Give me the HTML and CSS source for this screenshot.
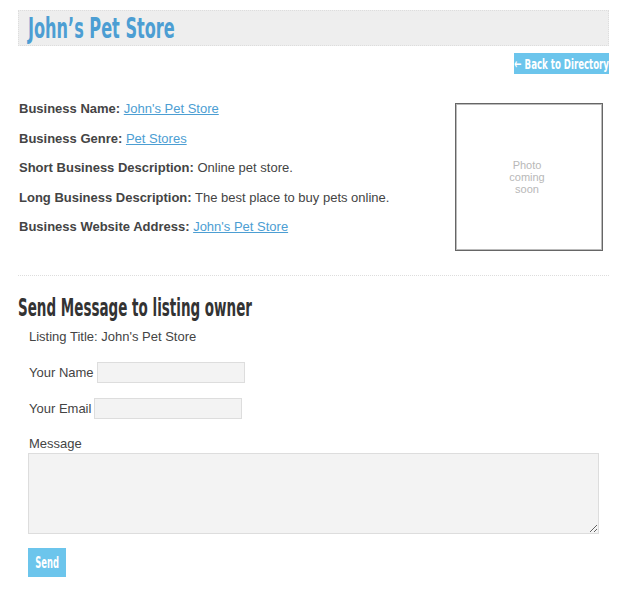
FILE: index.html
```html
<!DOCTYPE html>
<html>
<head>
<link rel="stylesheet" href="styles.css">
</head>
<body>

<div class="page">
  <h1 class="title"><span class="narrow">John’s Pet Store</span></h1>

  <div class="back-row">
    <a class="back-link" href="#"><span class="narrow">&larr; Back to Directory</span></a>
  </div>

  <div class="listing">
    <div class="details">
      <p><b>Business Name:</b> <a href="#">John's Pet Store</a></p>
      <p><b>Business Genre:</b> <a href="#">Pet Stores</a></p>
      <p><b>Short Business Description:</b> Online pet store.</p>
      <p><b>Long Business Description:</b> The best place to buy pets online.</p>
      <p><b>Business Website Address:</b> <a href="#">John's Pet Store</a></p>
    </div>
    <div class="photo">
      <span>Photo<br>coming<br>soon</span>
    </div>
  </div>

  <hr class="divider">

  <h2 class="section-title"><span class="narrow">Send Message to listing owner</span></h2>

  <form class="contact" action="#">
    <p class="listing-title">Listing Title: John's Pet Store</p>
    <div class="field">
      <label for="name">Your Name</label>
      <input type="text" id="name" name="name">
    </div>
    <div class="field">
      <label for="email">Your Email</label>
      <input type="text" id="email" name="email">
    </div>
    <div class="field-block">
      <label for="message">Message</label>
      <textarea id="message" name="message"></textarea>
    </div>
    <button type="submit"><span class="narrow">Send</span></button>
  </form>
</div>

</body>
</html>
```

FILE: styles.css
```css
body {
  margin: 0;
  font-family: "Liberation Sans", Arial, sans-serif;
  font-size: 13px;
  color: #444;
  background: #fff;
}

.page {
  padding: 10px 21px 0 18px;
}

/* condensed display face stand-in */
.narrow {
  display: inline-block;
  font-family: "DejaVu Sans Condensed", "DejaVu Sans", sans-serif;
  font-weight: bold;
  transform: scaleX(0.7);
  transform-origin: left center;
  white-space: nowrap;
}

.title {
  margin: 0;
  padding: 0 9px;
  height: 34px;
  line-height: 35px;
  background: #eee;
  border: 1px dotted #ddd;
  font-weight: normal;
  font-size: 28px;
  color: #4c9ed3;
}

.title .narrow {
  transform: scaleX(0.64);
}

.back-row {
  display: flex;
  justify-content: flex-end;
  margin-top: 7px;
}

.back-link {
  display: block;
  width: 95px;
  height: 21px;
  overflow: hidden;
  background: #6cc5ec;
  color: #fff;
  text-decoration: none;
  font-size: 14.5px;
  line-height: 22px;
  text-align: center;
}

.back-link .narrow {
  transform: scaleX(0.66);
  transform-origin: center;
  margin: 0 -30px;
}

.listing {
  display: flex;
  justify-content: space-between;
  margin-top: 27px;
}

.details {
  padding-left: 1px;
}

.details p {
  margin: 0 0 14px 0;
  line-height: 15.5px;
}

.details a {
  color: #4c9ed3;
}

.photo {
  width: 146px;
  height: 146px;
  margin: 2px 6px 0 0;
  border: 1px solid #666;
  box-shadow: inset 0 0 0 1px #bbb;
  display: flex;
  align-items: center;
  justify-content: center;
  text-align: center;
  font-size: 11px;
  line-height: 12px;
  color: #b8b8b8;
}

.photo span {
  margin-left: -4px;
}

.divider {
  margin: 24px 0 0 0;
  border: 0;
  border-top: 1px dotted #ddd;
}

.section-title {
  margin: 16px 0 0 0;
  font-weight: normal;
  font-size: 25px;
  line-height: 30px;
  color: #333;
}

.section-title .narrow {
  transform: scaleX(0.6);
}

.contact {
  padding: 0 10px;
}

.listing-title {
  margin: 6px 0 17px 1px;
  line-height: 16px;
}

.field {
  display: flex;
  align-items: center;
  gap: 3px;
  margin-bottom: 15px;
  padding-left: 1px;
}

.field input {
  width: 146px;
  height: 19px;
  padding: 0;
  border: 1px solid #ddd;
  background: #f3f3f3;
}

.field-block {
  padding-top: 1px;
}

.field-block label {
  display: block;
  line-height: 18px;
  padding-left: 1px;
}

.field-block textarea {
  display: block;
  width: 569px;
  height: 79px;
  margin-top: 0;
  padding: 0;
  border: 1px solid #ddd;
  background: #f3f3f3;
  resize: both;
}

button {
  margin-top: 14px;
  width: 38px;
  height: 29px;
  padding: 0;
  border: none;
  background: #6cc5ec;
  color: #fff;
  font-size: 15px;
  cursor: pointer;
  overflow: hidden;
}

button .narrow {
  transform: scaleX(0.62);
  transform-origin: center;
  margin: 0 -10px;
}
```
